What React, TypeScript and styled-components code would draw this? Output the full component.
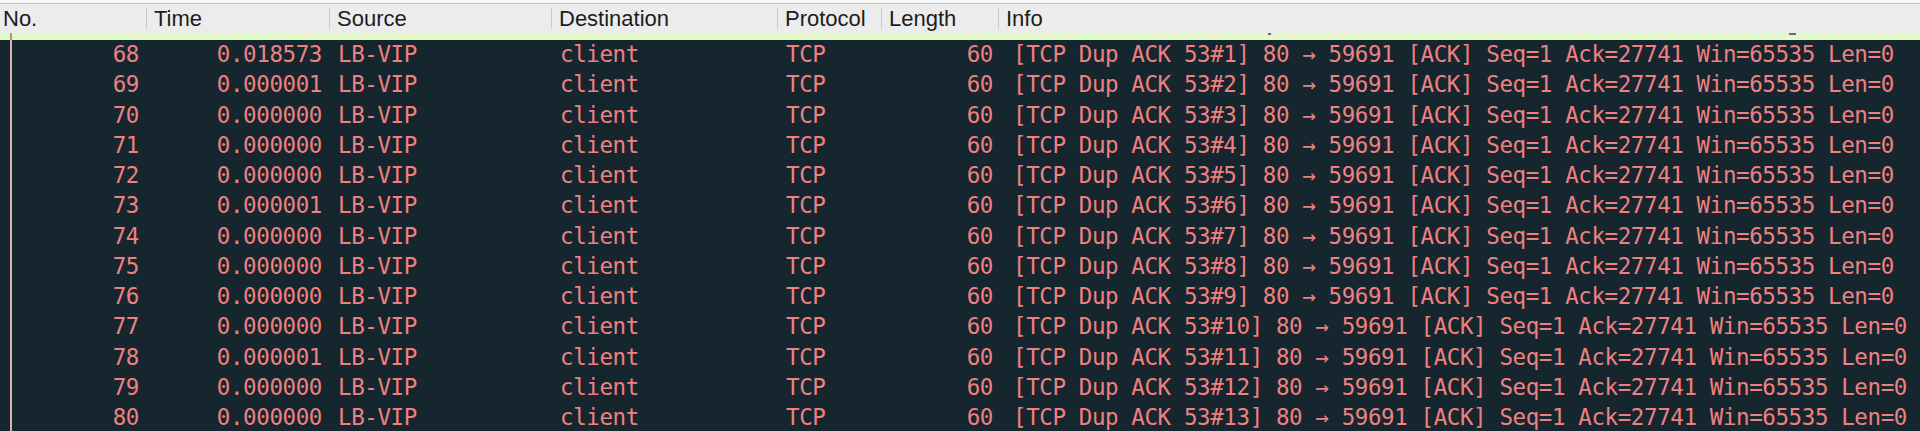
import React from "react";
import styled, { createGlobalStyle } from "styled-components";

const Global = createGlobalStyle`
  html, body { margin: 0; padding: 0; background: #16262e; }
  #root { width: 1920px; }
`;

const COLS = "146px 183px 222px 226px 104px 117px 1fr";

const Wrapper = styled.div`
  position: relative;
  width: 1920px;
  height: 431px;
  overflow: hidden;
  background: #16262e;
`;

const TopStrip = styled.div`
  height: 3px;
  background: #f6f6f6;
`;

const Header = styled.div`
  display: grid;
  grid-template-columns: ${COLS};
  background: #ececec;
  border-top: 1px solid #c4c4c4;
  padding: 4px 0;
`;

const HeaderCell = styled.div<{ $first?: boolean }>`
  height: 21px;
  line-height: 21px;
  padding-left: ${(p) => (p.$first ? "3px" : "7px")};
  border-left: ${(p) => (p.$first ? "none" : "1px solid #c9c9c9")};
  font-family: "Liberation Sans", Arial, sans-serif;
  font-size: 22px;
  color: #1c1c1c;
  white-space: nowrap;
  overflow: visible;
`;

const GreenBand = styled.div`
  height: 7px;
  background: #e2fbc6;
`;

const Rows = styled.div`
  display: flex;
  flex-direction: column;
`;

const Row = styled.div`
  display: grid;
  grid-template-columns: ${COLS};
  height: 30.25px;
  flex: none;
`;

const Cell = styled.div<{ $right?: boolean; $pad?: number }>`
  font-family: "DejaVu Sans Mono", Menlo, monospace;
  font-size: 22.5px;
  letter-spacing: -0.4px;
  line-height: 28px;
  color: #f08080;
  white-space: pre;
  overflow: visible;
  text-align: ${(p) => (p.$right ? "right" : "left")};
  padding: ${(p) =>
    p.$right ? `0 ${p.$pad ?? 7}px 0 0` : `0 0 0 ${p.$pad ?? 9}px`};
`;

const RelatedLine = styled.div`
  position: absolute;
  left: 10px;
  top: 33px;
  bottom: 0;
  width: 2px;
  background: #e6aaaa;
  &::before {
    content: "";
    position: absolute;
    left: 0;
    top: 0;
    width: 2px;
    height: 7px;
    background: #9a9a9a;
  }
`;

const Tick = styled.div<{ $x: number; $y: number; $w: number }>`
  position: absolute;
  left: ${(p) => p.$x}px;
  top: ${(p) => p.$y}px;
  width: ${(p) => p.$w}px;
  height: 2px;
  background: #6a6a6a;
`;

const headers = ["No.", "Time", "Source", "Destination", "Protocol", "Length", "Info"];

const times = [
  "0.018573",
  "0.000001",
  "0.000000",
  "0.000000",
  "0.000000",
  "0.000001",
  "0.000000",
  "0.000000",
  "0.000000",
  "0.000000",
  "0.000001",
  "0.000000",
  "0.000000",
];

const packets = times.map((t, i) => ({
  no: 68 + i,
  time: t,
  src: "LB-VIP",
  dst: "client",
  proto: "TCP",
  len: 60,
  info: `[TCP Dup ACK 53#${i + 1}] 80 \u2192 59691 [ACK] Seq=1 Ack=27741 Win=65535 Len=0`,
}));

export default function App() {
  return (
    <>
      <Global />
      <Wrapper>
        <TopStrip />
        <Header>
          {headers.map((h, i) => (
            <HeaderCell key={h} $first={i === 0}>
              {h}
            </HeaderCell>
          ))}
        </Header>
        <GreenBand />
        <Rows>
          {packets.map((p) => (
            <Row key={p.no}>
              <Cell $right>{p.no}</Cell>
              <Cell $right>{p.time}</Cell>
              <Cell>{p.src}</Cell>
              <Cell>{p.dst}</Cell>
              <Cell>{p.proto}</Cell>
              <Cell $right $pad={5}>{p.len}</Cell>
              <Cell $pad={15}>{p.info}</Cell>
            </Row>
          ))}
        </Rows>
        <RelatedLine />
        <Tick $x={1268} $y={33} $w={3} />
        <Tick $x={1789} $y={33} $w={7} />
      </Wrapper>
    </>
  );
}
